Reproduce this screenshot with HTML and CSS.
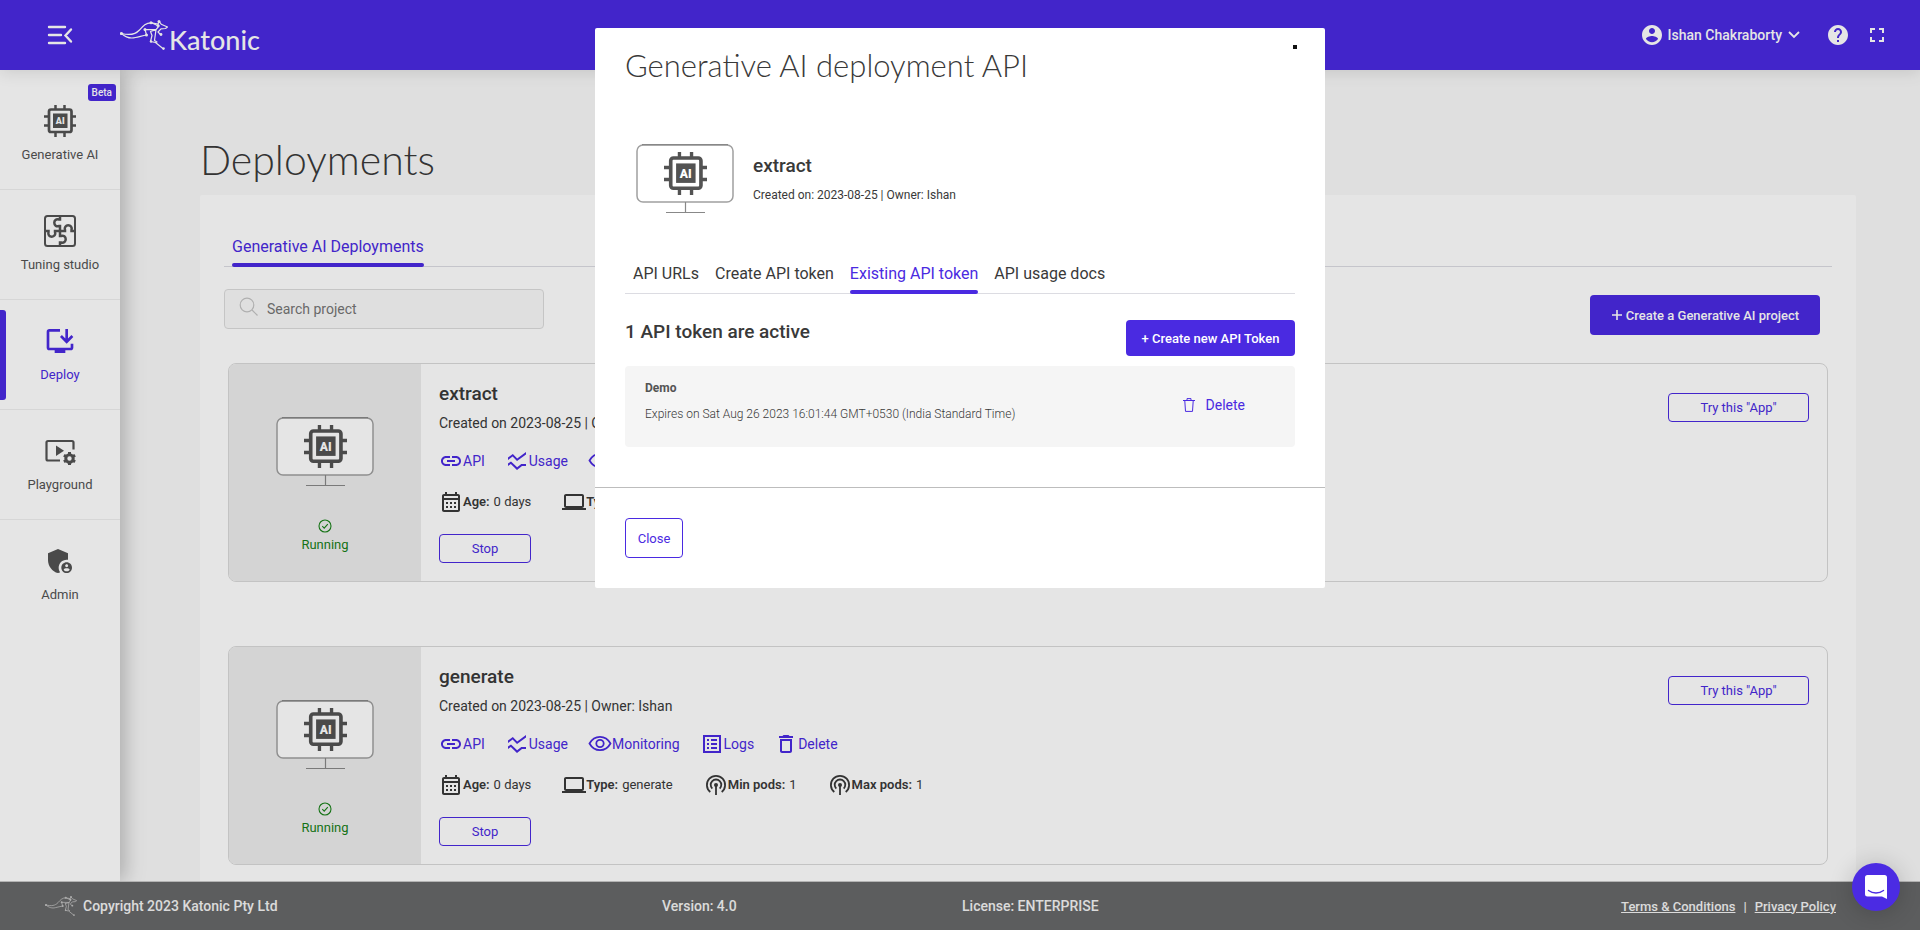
FILE: index.html
```html
<!DOCTYPE html>
<html lang="en">
<head>
<meta charset="utf-8">
<title>Katonic - Deployments</title>
<link rel="stylesheet" href="styles.css">
</head>
<body>
<svg class="sprite" aria-hidden="true">
  <symbol id="chip" viewBox="0 0 32 32">
    <path d="M11.500 0v5M20.500 0v5M11.500 27v5M20.500 27v5M0 11.500h5M0 20.500h5M27 11.500h5M27 20.500h5" fill="none" stroke="currentColor" stroke-width="2.500"/>
    <rect x="5" y="4.500" width="22.500" height="22.500" rx="2" fill="none" stroke="currentColor" stroke-width="2.700"/>
    <rect x="9" y="8.500" width="14.500" height="14.500" fill="currentColor"/>
    <text x="16.200" y="19.200" class="chip-text">AI</text>
  </symbol>
  <symbol id="monitor" viewBox="0 0 98 70">
    <rect x="1" y="1" width="96" height="57" rx="6" fill="#fff" stroke="#a0a0a0" stroke-width="1.500"/>
    <path d="M6 .7h86M49.500 58v10M30 68.500h39" fill="none" stroke="#888" stroke-width="1.200"/>
    <use href="#chip" x="28" y="8" width="43" height="43"/>
  </symbol>
  <symbol id="puzzle" viewBox="0 0 32 32">
    <g fill="none" stroke="currentColor">
      <rect x="1" y="1" width="30" height="30" rx="2.500" stroke-width="2"/>
      <path stroke-width="2.500" d="M16 1v3.500h-1c-3-.8-4.700 1-4.700 3.300s2 4.200 4.700 3.200h1v5M16 31v-3.500h1c3 .8 4.700-1 4.700-3.300s-2-4.200-4.700-3.200h-1v-5M1 16h3.500v1c-.8 3 1 4.700 3.300 4.700s4.200-2 3.200-4.700v-1h5M31 16h-3.500v-1c.8-3-1-4.700-3.300-4.700s-4.200 2-3.200 4.700v1h-5"/>
    </g>
  </symbol>
  <symbol id="deploy" viewBox="0 0 24 24"><path d="M20 17H4V5h8V3H4c-1.110 0-2 .89-2 2v12c0 1.100.89 2 2 2h4v2h8v-2h4c1.100 0 2-.9 2-2v-3h-2v3zM17 14l5-5-1.410-1.410L18 10.170V3h-2v7.170l-2.590-2.580L12 9z"/></symbol>
  <symbol id="play" viewBox="0 0 32 32">
    <path d="M16 25.500H4c-1 0-1.500-.6-1.500-1.500V7.500C2.500 6.500 3.100 6 4 6h24c1 0 1.500.6 1.500 1.500v7" fill="none" stroke="currentColor" stroke-width="2.200"/>
    <path d="M12 10.500V21l8-5.200z"/>
    <circle cx="25.500" cy="23.500" r="3.700" fill="none" stroke="currentColor" stroke-width="3"/>
    <path d="M25.500 17v3M25.500 27v3M19.900 20.200l2.600 1.500M28.500 25.300l2.600 1.500M19.900 26.800l2.600-1.500M28.500 21.700l2.600-1.500" stroke="currentColor" stroke-width="3" fill="none"/>
  </symbol>
  <symbol id="admin" viewBox="0 0 24 24"><path d="M17 11c.34 0 .67.04 1 .09V6.270L10.500 3 3 6.270v4.910c0 4.540 3.200 8.790 7.500 9.820.55-.13 1.080-.32 1.600-.55-.69-.98-1.100-2.170-1.100-3.450 0-3.310 2.690-6 6-6z"/><path d="M17 13c-2.210 0-4 1.790-4 4s1.790 4 4 4 4-1.790 4-4-1.790-4-4-4zm0 1.380c.62 0 1.120.51 1.120 1.120s-.51 1.120-1.120 1.120-1.120-.51-1.120-1.120.5-1.120 1.120-1.120zm0 5.370c-.93 0-1.740-.46-2.240-1.170.05-.72 1.510-1.080 2.240-1.080s2.190.36 2.240 1.080c-.5.71-1.310 1.170-2.240 1.170z"/></symbol>
  <symbol id="roo" viewBox="0 0 48 30">
    <g fill="none" stroke="currentColor" stroke-width="1.200" stroke-linejoin="round" stroke-linecap="round">
      <path d="M1.500 13.500c8 2 14 1 18-3.500 3.500-4 6.500-7.500 12-7.200l6.500 1.200 1.200-2.500 2 2.700 6.300 2.800-2 1.500-4.500.3-3 3.200 2.500 2.500"/>
      <path d="M1.500 13.500c4.500 4.200 9.500 5.200 14 4 4-.8 7-1.800 11-2.500M25 9.500l11 .2 3-3.700M31.500 2.800l7 3.200M25 9.500l1.500 5.500M30.500 11.500l1.500 4-1.500 6 5 1 8 6.500M36 9.700l-1.500 10.800 2.500 1.500M36 9.700l-5.500 1.800"/>
    </g>
    <g fill="currentColor"><circle cx="1.500" cy="13.500" r="1.600"/><circle cx="31" cy="2.800" r="1.500"/><circle cx="39" cy="1.500" r="1.500"/><circle cx="25" cy="9.500" r="1.500"/><circle cx="26.500" cy="15" r="1.500"/><circle cx="38" cy="5.500" r="1.500"/><circle cx="41" cy="14.500" r="1.400"/><circle cx="31" cy="21.500" r="1.200"/><circle cx="43.500" cy="28.500" r="1.300"/></g>
  </symbol>
  <symbol id="link" viewBox="0 0 24 24"><path d="M3.900 12c0-1.710 1.390-3.100 3.100-3.100h4V7H7c-2.760 0-5 2.240-5 5s2.240 5 5 5h4v-1.900H7c-1.710 0-3.100-1.390-3.100-3.100zM8 13h8v-2H8v2zm9-6h-4v1.900h4c1.710 0 3.100 1.390 3.100 3.100s-1.390 3.100-3.100 3.100h-4V17h4c2.760 0 5-2.240 5-5s-2.240-5-5-5z"/></symbol>
  <symbol id="usage" viewBox="0 0 24 24"><path d="M21 5.470L12 12 7.620 7.620 3 11V8.520L7.830 5l4.380 4.380L21 3v2.470zM21 15h-4.700l-4.170 3.340L6 12.410l-3 2.130V17l2.800-2 6.200 6 5-4h4v-2z"/></symbol>
  <symbol id="eye" viewBox="0 0 24 24"><g fill="none" stroke="currentColor" stroke-width="1.800"><path d="M1.500 11.500C4 7 7.500 4.800 12 4.800s8 2.200 10.500 6.700C20 16 16.500 18.200 12 18.200S4 16 1.500 11.500z"/><circle cx="12" cy="11.500" r="3.700"/></g></symbol>
  <symbol id="logs" viewBox="0 0 24 24"><path d="M19 5v14H5V5h14m2-2H3v18h18V3zM11 7h6v2h-6V7zm0 4h6v2h-6v-2zm0 4h6v2h-6zM7 7h2v2H7zm0 4h2v2H7zm0 4h2v2H7z"/></symbol>
  <symbol id="trash" viewBox="0 0 24 24"><path d="M6 19c0 1.100.9 2 2 2h8c1.100 0 2-.9 2-2V7H6v12zM8 9h8v10H8V9zm7.500-5l-1-1h-5l-1 1H5v2h14V4z"/></symbol>
  <symbol id="calendar" viewBox="0 0 24 24"><path d="M19 4h-1V2h-2v2H8V2H6v2H5c-1.110 0-1.990.9-1.990 2L3 20c0 1.100.89 2 2 2h14c1.100 0 2-.9 2-2V6c0-1.100-.9-2-2-2zm0 16H5V10h14v10zm0-12H5V6h14v2zM9 14H7v-2h2v2zm4 0h-2v-2h2v2zm4 0h-2v-2h2v2zm-8 4H7v-2h2v2zm4 0h-2v-2h2v2zm4 0h-2v-2h2v2z"/></symbol>
  <symbol id="laptop" viewBox="0 0 24 24"><path d="M20 18c1.100 0 2-.9 2-2V6c0-1.100-.9-2-2-2H4c-1.100 0-2 .9-2 2v10c0 1.100.9 2 2 2H0v2h24v-2h-4zM4 6h16v10H4V6z"/></symbol>
  <symbol id="pod" viewBox="0 0 24 24"><g fill="none" stroke="currentColor" stroke-width="1.800"><path d="M6.300 19a9.100 9.100 0 1 1 11.400 0M8.300 15.600a5.300 5.300 0 1 1 7.400 0M12 12v10"/></g><circle cx="12" cy="12" r="2"/></symbol>
  <symbol id="user" viewBox="0 0 24 24"><path d="M12 2C6.480 2 2 6.480 2 12s4.480 10 10 10 10-4.480 10-10S17.520 2 12 2zm0 3c1.660 0 3 1.340 3 3s-1.340 3-3 3-3-1.340-3-3 1.340-3 3-3zm0 14.200c-2.500 0-4.710-1.280-6-3.220.03-1.990 4-3.080 6-3.080 1.990 0 5.970 1.090 6 3.080-1.290 1.940-3.500 3.220-6 3.220z"/></symbol>
  <symbol id="help" viewBox="0 0 24 24"><path d="M12 2C6.480 2 2 6.480 2 12s4.480 10 10 10 10-4.480 10-10S17.520 2 12 2zm1 17h-2v-2h2v2zm2.070-7.750l-.9.92C13.450 12.900 13 13.500 13 15h-2v-.5c0-1.100.45-2.100 1.170-2.830l1.240-1.260c.37-.36.59-.86.59-1.410 0-1.100-.9-2-2-2s-2 .9-2 2H8c0-2.210 1.790-4 4-4s4 1.790 4 4c0 .88-.36 1.680-.93 2.250z"/></symbol>
  <symbol id="full" viewBox="0 0 24 24"><path d="M7 14H5v5h5v-2H7v-3zm-2-4h2V7h3V5H5v5zm12 7h-3v2h5v-5h-2v3zM14 5v2h3v3h2V5h-5z"/></symbol>
  <symbol id="check" viewBox="0 0 14 14"><g fill="none" stroke="currentColor" stroke-width="1.100"><circle cx="7" cy="7" r="6"/><path d="M4.300 7.200l1.900 1.900 3.600-3.900"/></g></symbol>
</svg>

<div class="app">
  <header class="topbar">
    <button class="icon-btn menu" aria-label="Toggle menu"><svg width="26" height="20" viewBox="0 0 26 20"><path d="M2 2h16M2 10h12M2 18h16M24 4.500L18.500 10.500l5.500 6" fill="none" stroke="currentColor" stroke-width="2.400" stroke-linecap="round"/></svg></button>
    <a class="logo" href="#"><svg width="48" height="30"><use href="#roo"/></svg><span>Katonic</span></a>
    <div class="account">
      <button class="icon-btn user"><svg class="i24"><use href="#user"/></svg><span>Ishan Chakraborty</span><svg class="chev" viewBox="0 0 12 8"><path d="M1 1l5 5 5-5" fill="none" stroke="currentColor" stroke-width="1.800"/></svg></button>
      <button class="icon-btn" aria-label="Help"><svg class="i24"><use href="#help"/></svg></button>
      <button class="icon-btn" aria-label="Full screen"><svg class="i24"><use href="#full"/></svg></button>
    </div>
  </header>

  <div class="body">
    <nav class="side">
      <a class="side-item first" href="#"><span class="beta">Beta</span><svg class="i32"><use href="#chip"/></svg><span>Generative AI</span></a>
      <a class="side-item" href="#"><svg class="i32"><use href="#puzzle"/></svg><span>Tuning studio</span></a>
      <a class="side-item active" href="#"><svg class="i32"><use href="#deploy"/></svg><span>Deploy</span></a>
      <a class="side-item" href="#"><svg class="i32"><use href="#play"/></svg><span>Playground</span></a>
      <a class="side-item" href="#"><svg class="i32"><use href="#admin"/></svg><span>Admin</span></a>
    </nav>

    <main class="main">
      <h1>Deployments</h1>
      <section class="panel">
        <div class="tabs"><button class="tab on">Generative AI Deployments</button></div>
        <div class="tools">
          <label class="search"><svg width="20" height="20" viewBox="0 0 20 20"><g fill="none" stroke="currentColor" stroke-width="1.200"><circle cx="8" cy="8" r="6.800"/><path d="M13 13l5.500 5.500"/></g></svg><input type="text" placeholder="Search project" aria-label="Search project"></label>
          <button class="btn primary create"><svg width="12" height="12" viewBox="0 0 12 12"><path d="M6 1v10M1 6h10" stroke="currentColor" stroke-width="1.600"/></svg>Create a Generative AI project</button>
        </div>

        <article class="card">
          <div class="card-side"><svg class="monitor"><use href="#monitor"/></svg><svg class="check"><use href="#check"/></svg><span>Running</span></div>
          <div class="card-main">
            <h2>extract</h2>
            <p>Created on 2023-08-25 | Owner: Ishan</p>
            <div class="links">
              <a href="#"><svg class="i24"><use href="#link"/></svg>API</a>
              <a href="#"><svg class="i24"><use href="#usage"/></svg>Usage</a>
              <a href="#"><svg class="i24"><use href="#eye"/></svg>Monitoring</a>
              <a href="#"><svg class="i24"><use href="#logs"/></svg>Logs</a>
              <a href="#"><svg class="i24"><use href="#trash"/></svg>Delete</a>
            </div>
            <div class="facts">
              <span><svg class="i24"><use href="#calendar"/></svg><b>Age:</b> 0 days</span>
              <span><svg class="i24"><use href="#laptop"/></svg><b>Type:</b> extract</span>
            </div>
            <button class="btn outline stop">Stop</button>
          </div>
          <button class="btn outline try">Try this "App"</button>
        </article>

        <article class="card">
          <div class="card-side"><svg class="monitor"><use href="#monitor"/></svg><svg class="check"><use href="#check"/></svg><span>Running</span></div>
          <div class="card-main">
            <h2>generate</h2>
            <p>Created on 2023-08-25 | Owner: Ishan</p>
            <div class="links">
              <a href="#"><svg class="i24"><use href="#link"/></svg>API</a>
              <a href="#"><svg class="i24"><use href="#usage"/></svg>Usage</a>
              <a href="#"><svg class="i24"><use href="#eye"/></svg>Monitoring</a>
              <a href="#"><svg class="i24"><use href="#logs"/></svg>Logs</a>
              <a href="#"><svg class="i24"><use href="#trash"/></svg>Delete</a>
            </div>
            <div class="facts">
              <span><svg class="i24"><use href="#calendar"/></svg><b>Age:</b> 0 days</span>
              <span><svg class="i24"><use href="#laptop"/></svg><b>Type:</b> generate</span>
              <span><svg class="i24"><use href="#pod"/></svg><b>Min pods:</b> 1</span>
              <span><svg class="i24"><use href="#pod"/></svg><b>Max pods:</b> 1</span>
            </div>
            <button class="btn outline stop">Stop</button>
          </div>
          <button class="btn outline try">Try this "App"</button>
        </article>
      </section>
    </main>
  </div>

  <footer class="footer">
    <div class="copy"><svg width="32" height="20"><use href="#roo"/></svg>Copyright 2023 Katonic Pty Ltd</div>
    <div>Version: 4.0</div>
    <div>License: ENTERPRISE</div>
    <div class="legal"><a href="#">Terms &amp; Conditions</a><span>|</span><a href="#">Privacy Policy</a></div>
  </footer>
</div>

<div class="backdrop">
  <div class="modal" role="dialog" aria-modal="true" aria-labelledby="modal-title">
    <button class="dot" aria-label="Close dialog"></button>
    <div class="modal-body">
      <h2 class="modal-title" id="modal-title">Generative AI deployment API</h2>
      <div class="summary">
        <svg class="monitor"><use href="#monitor"/></svg>
        <div><h3>extract</h3><p>Created on: 2023-08-25 | Owner: Ishan</p></div>
      </div>
      <div class="tabs modal-tabs">
        <button class="tab">API URLs</button>
        <button class="tab">Create API token</button>
        <button class="tab on">Existing API token</button>
        <button class="tab">API usage docs</button>
      </div>
      <div class="token-head"><h3>1 API token are active</h3><button class="btn primary new-token">+ Create new API Token</button></div>
      <div class="token">
        <div><h4>Demo</h4><p>Expires on Sat Aug 26 2023 16:01:44 GMT+0530 (India Standard Time)</p></div>
        <button class="delete"><svg width="12" height="14" viewBox="0 0 12 14"><path d="M0 2.500h12M4 2V.6h4V2M1.800 3l.7 10.400h7L10.200 3" fill="none" stroke="currentColor"/></svg>Delete</button>
      </div>
    </div>
    <div class="modal-foot"><button class="btn outline close">Close</button></div>
  </div>
</div>
<button class="chat" aria-label="Open chat"><svg width="24" height="26" viewBox="0 0 24 26"><path d="M3.500 1h17A2.500 2.500 0 0 1 23 3.500V25l-5-2.500H3.500A2.500 2.500 0 0 1 1 20V3.500A2.500 2.500 0 0 1 3.500 1z" fill="#fff"/><path d="M4.500 16.500c4.500 3.300 10.500 3.300 15 0" fill="none" stroke="#4b2be3" stroke-width="1.400" stroke-linecap="round"/></svg></button>
</body>
</html>
```
FILE: styles.css
```css
* { box-sizing: border-box; }
body { margin: 0; font-family: Roboto, "Liberation Sans", sans-serif; font-size: 14px; color: #393939; background: #f9f9f9; }
h1, h2, h3, h4, p { margin: 0; }
a { color: inherit; text-decoration: none; }
button { font: inherit; color: inherit; background: none; border: 0; padding: 0; cursor: pointer; }
svg { fill: currentColor; flex: none; display: block; }
.sprite { display: none; }
.chip-text { font: 900 9px Roboto, sans-serif; fill: #fff; text-anchor: middle; }
.i24 { width: 24px; height: 24px; }
.i32 { width: 32px; height: 32px; }

.app { display: flex; flex-direction: column; height: 100vh; overflow: hidden; }
.topbar { display: flex; align-items: center; height: 70px; flex: none; padding: 0 31px 0 47px; background: #4a2ae1; color: #fff; box-shadow: 0 2px 16px rgba(0, 0, 0, .12); z-index: 2; }
.icon-btn { display: flex; align-items: center; }
.logo { display: flex; gap: 1px; margin-left: 47px; font: 500 27px/30px Lato, sans-serif; height: 30px; }
.logo span { padding-top: 5px; }
.account { display: flex; align-items: center; margin-left: auto; gap: 15px; font-weight: 500; }
.user { gap: 4px; margin-right: 11px; }
.chev { width: 12px; height: 8px; margin-left: 2px; }

.body { display: flex; flex: 1; min-height: 0; }
.side { width: 120px; flex: none; background: #fff; box-shadow: 4px 0 20px rgba(0, 0, 0, .25); z-index: 1; color: #535353; font-size: 13px; line-height: 20px; }
.side-item { display: flex; flex-direction: column; align-items: center; gap: 8px; height: 110px; padding-top: 25px; border-bottom: 1px solid #efefef; position: relative; }
.side-item.first { height: 120px; padding-top: 35px; }
.side-item:last-child { border: 0; }
.beta { position: absolute; top: 14px; right: 4px; padding: 0 4px; line-height: 17px; font-size: 10px; font-weight: 500; color: #fff; background: #4a2ae1; border-radius: 3px; }
.active { color: #4a2ae1; }
.active::before { content: ""; position: absolute; left: 0; top: 10px; width: 6px; height: 90px; border-radius: 0 3px 3px 0; background: #4a2ae1; }

.main { flex: 1; min-width: 0; overflow: hidden; padding: 65px 64px 0 80px; }
h1 { font: 300 41px/50px Lato, sans-serif; margin: 0 0 10px; }
.panel { background: #fff; border-radius: 2px; padding: 35px 24px; min-height: 100%; }
.tabs { display: flex; gap: 16px; padding: 0 8px; border-bottom: 1px solid #dcdce2; font-size: 16px; }
.tab { line-height: 33px; border-bottom: 4px solid transparent; margin-bottom: -1px; position: relative; }
.tab.on { color: #4a2ae1; }
.tab.on::after { content: ""; position: absolute; left: 0; right: 0; bottom: -4px; height: 4px; border-radius: 2px; background: #4a2ae1; }
.tools { display: flex; justify-content: space-between; padding: 22px 12px 28px 0; }
.search { display: flex; gap: 8px; width: 320px; height: 40px; padding: 7px 14px; border: 1px solid #dcdcdc; border-radius: 4px; background: #f9f9f9; color: #c4c4c4; }
.search input { flex: 1; min-width: 0; border: 0; outline: 0; padding: 0; background: none; font: inherit; height: 24px; color: #393939; }
.search input::placeholder { color: #757575; opacity: 1; }
.btn { display: flex; align-items: center; justify-content: center; font-size: 13px; border-radius: 4px; }
.primary { background: #4a2ae1; color: #fff; font-weight: 500; }
.outline { border: 1px solid #4a2ae1; color: #4a2ae1; }
.create { gap: 3px; width: 230px; height: 40px; margin-top: 6px; }

.card { display: flex; align-items: flex-start; margin: 0 4px 64px; border: 1px solid #dadada; border-radius: 8px; padding-right: 18px; overflow: hidden; height: 219px; }
.card-side { width: 192px; align-self: stretch; display: flex; flex-direction: column; align-items: center; padding-top: 53px; background: #ededed; color: #188018; font-size: 13px; line-height: 20px; }
.monitor { width: 98px; height: 70px; color: #535353; }
.check { width: 14px; height: 14px; margin: 32px 0 2px; }
.card-main { flex: 1; padding: 18px; display: flex; flex-direction: column; align-items: flex-start; }
.card h2, h3 { font-size: 19px; line-height: 24px; font-weight: 500; }
.card p { line-height: 20px; margin-top: 7px; }
.links { display: flex; gap: 20px; margin-top: 16px; color: #4a2ae1; }
.links a, .facts span { display: flex; align-items: center; line-height: 24px; }
.facts { display: flex; gap: 31px; margin-top: 17px; font-size: 13px; }
.facts b { margin-right: 4px; font-weight: 600; }
.stop { width: 92px; height: 29px; margin-top: 20px; }
.try { width: 141px; height: 29px; margin-top: 29px; }

.footer { display: grid; grid-template-columns: 617px 300px 1fr auto; align-items: center; height: 49px; flex: none; padding: 0 84px 0 45px; background: #676869; border-top: 1px solid #c8c8c8; color: #f4f4f4; font-weight: 500; z-index: 2; }
.copy { display: flex; align-items: center; gap: 6px; }
.copy svg { color: #c0c0c0; }
.legal { display: flex; gap: 8px; font-size: 13px; }
.legal a { text-decoration: underline; }

.backdrop { position: fixed; inset: 0; z-index: 10; background: rgba(0, 0, 0, .1); padding-top: 28px; }
.modal { width: 730px; margin: 0 auto; background: #fff; border-radius: 2px; position: relative; }
.dot { position: absolute; top: 17px; right: 28px; width: 4px; height: 4px; background: #111; }
.modal-body { padding: 15px 30px 40px; border-bottom: 1px solid #bdbdbd; }
.modal-title { font: 300 31px/44px Lato, sans-serif; }
.summary { display: flex; gap: 19px; margin-top: 57px; padding-left: 11px; }
.summary h3 { margin-top: 10px; }
.summary p { font-size: 12px; line-height: 20px; margin-top: 7px; }
.modal-tabs { margin-top: 43px; }
.token-head { display: flex; justify-content: space-between; margin-top: 26px; }
.new-token { height: 36px; width: 169px; }
.token { display: flex; justify-content: space-between; margin-top: 10px; height: 81px; padding: 12px 50px 0 20px; background: #f5f5f5; border-radius: 4px; }
.token h4 { font-size: 12px; line-height: 20px; font-weight: 700; color: #535353; }
.token p { font-size: 12px; line-height: 20px; margin-top: 6px; font-weight: 300; }
.delete { display: flex; align-items: center; gap: 11px; height: 54px; color: #4a2ae1; }
.modal-foot { padding: 30px; }
.close { width: 58px; height: 40px; }
.chat { position: fixed; right: 20px; bottom: 19px; z-index: 11; width: 48px; height: 48px; display: flex; align-items: center; justify-content: center; border-radius: 50%; background: #4b2be3; box-shadow: 0 2px 24px rgba(0, 0, 0, .2); }
```
